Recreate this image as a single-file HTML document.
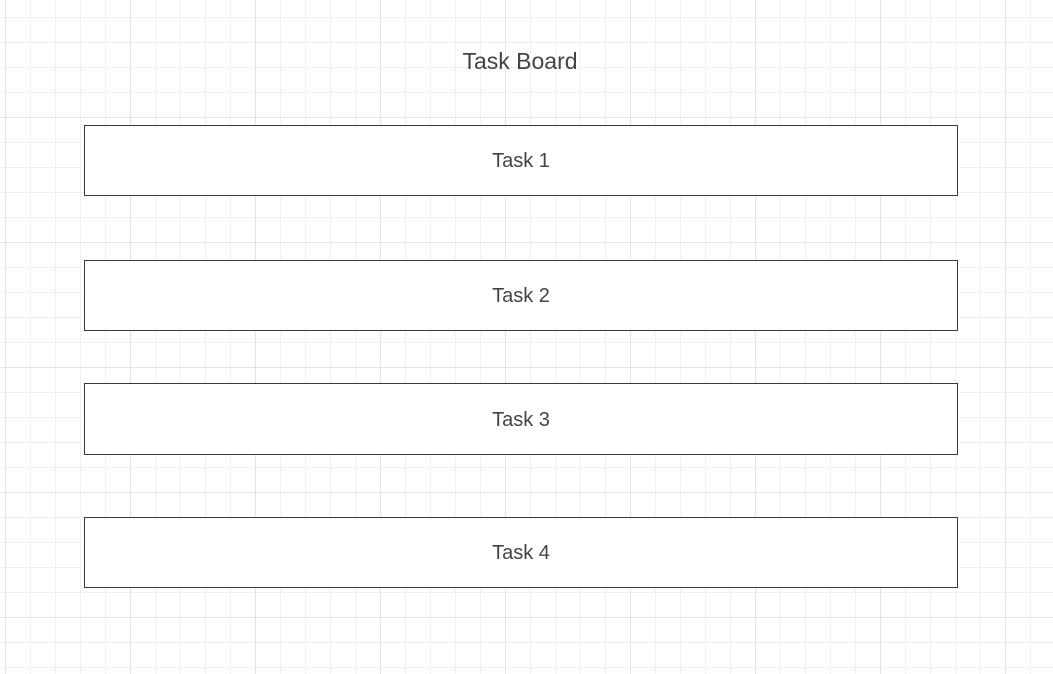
<!DOCTYPE html>
<html><head><style>
html,body{margin:0;padding:0}
body{width:1053px;height:674px;overflow:hidden;position:relative;background-color:#fff;
background-image:
linear-gradient(to right,#e4e4e4 1px,transparent 1px),
linear-gradient(to bottom,#e4e4e4 1px,transparent 1px),
linear-gradient(to right,#f0f0f0 1px,transparent 1px),
linear-gradient(to bottom,#f0f0f0 1px,transparent 1px);
background-size:125px 125px,125px 125px,25px 25px,25px 25px;
background-position:5px -8px,5px -8px,5px -8px,5px -8px;
font-family:"Liberation Sans",sans-serif;color:#444}
.t{position:absolute;left:0;width:1040px;top:48px;text-align:center;font-size:23px}
.b{position:absolute;left:84px;width:872px;height:69px;border:1px solid #3a3a3a;background:#fff;display:flex;align-items:center;justify-content:center;font-size:20px;box-sizing:content-box;padding-top:2px;height:67px}
</style></head><body>
<div class="t">Task Board</div>
<div class="b" style="top:125px">Task 1</div>
<div class="b" style="top:260px">Task 2</div>
<div class="b" style="top:383px;height:68px">Task 3</div>
<div class="b" style="top:517px">Task 4</div>
</body></html>
